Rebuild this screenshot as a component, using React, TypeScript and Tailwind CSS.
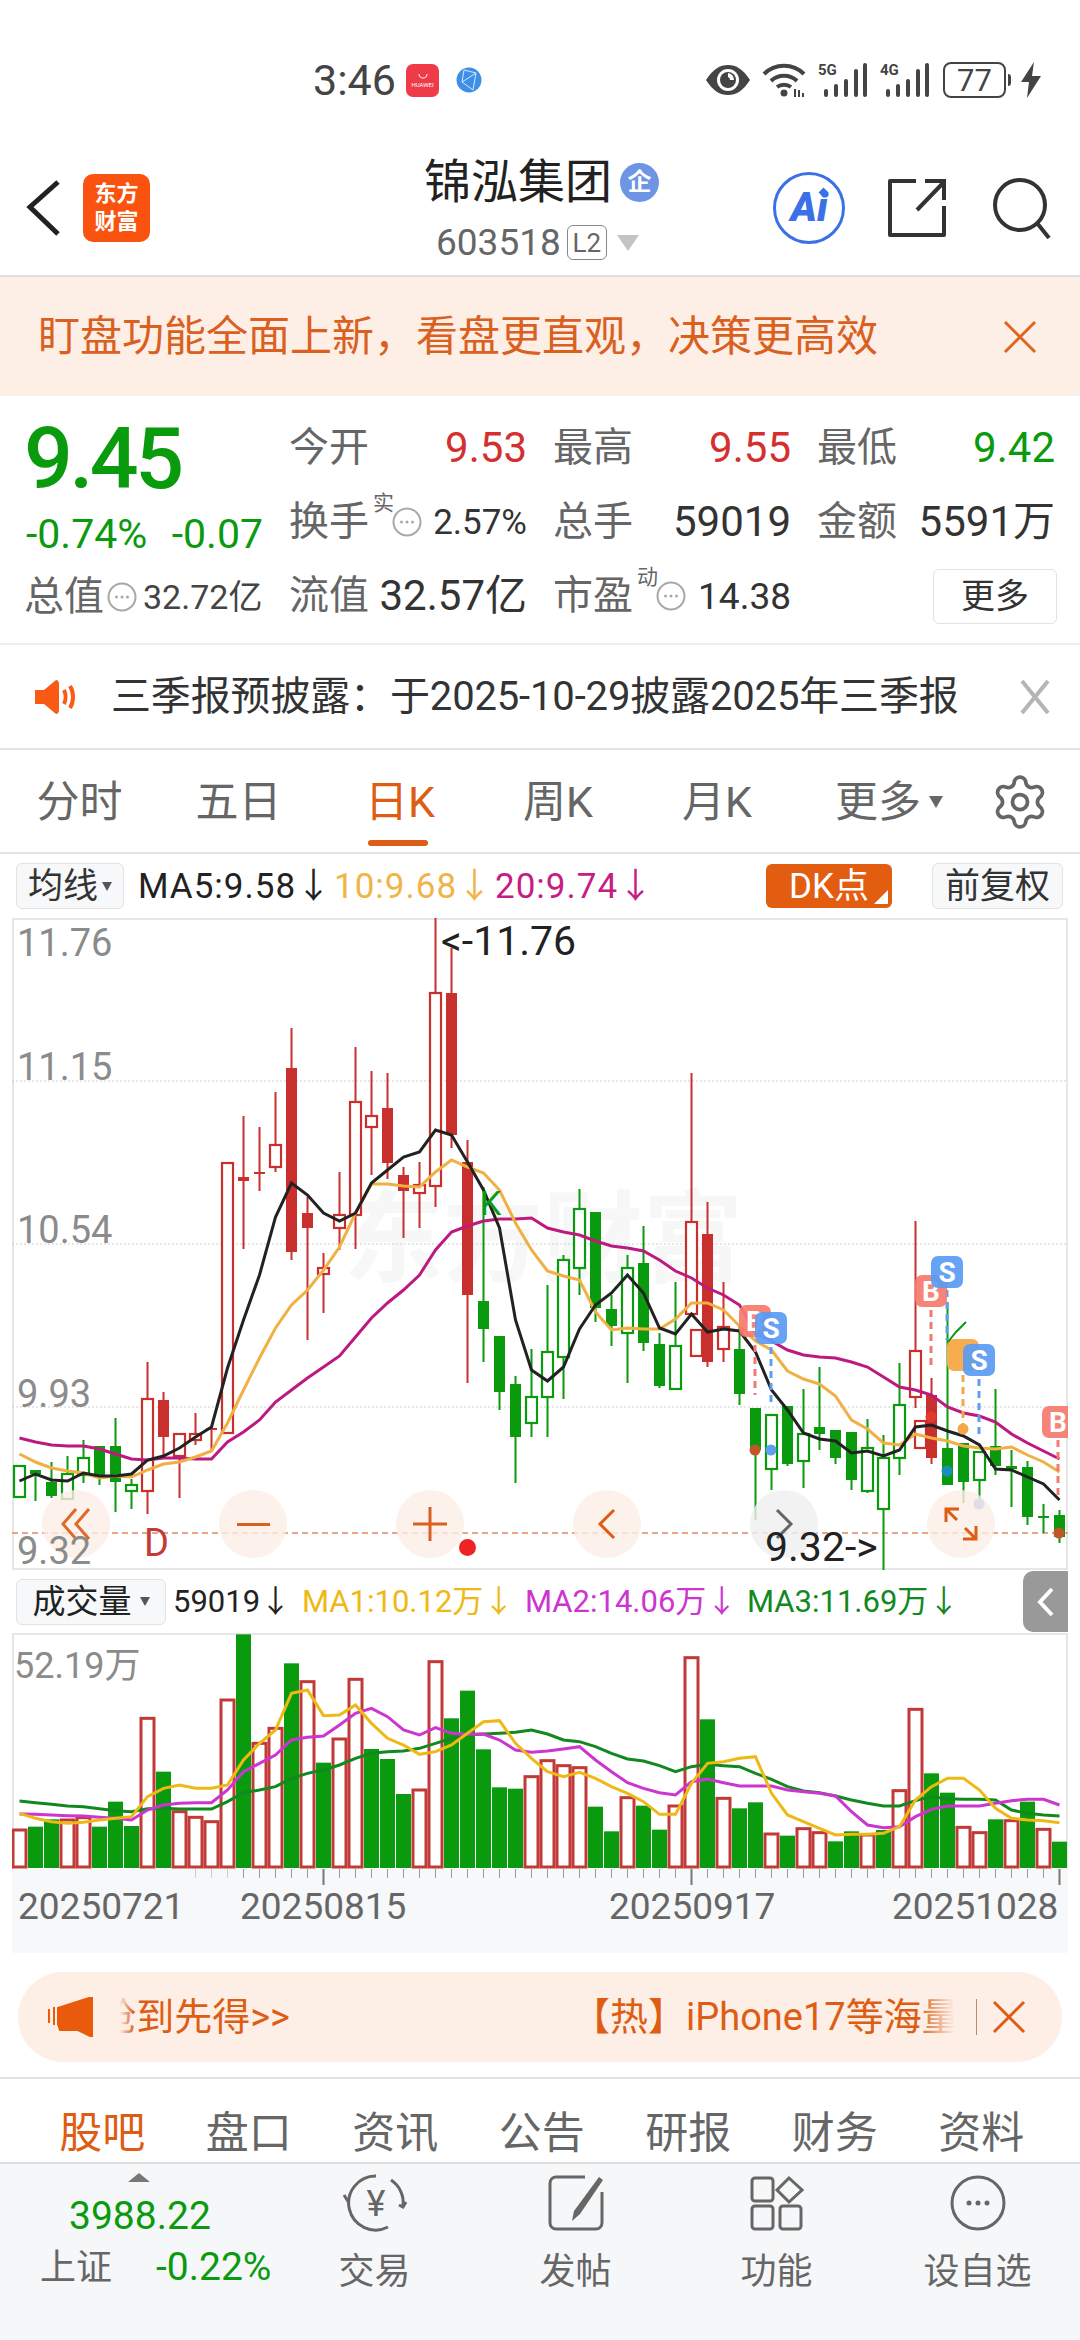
import { Settings } from 'lucide-react';

const RED = '#c92f2d';
const GREEN = '#0a9a0e';

// [kind, wickTop, bodyTop, bodyBottom, wickBottom] r/g hollow, R/G solid
type Candle = [string, number, number, number, number];

const candles: Candle[] = [
  ['g', 1466, 1466, 1497, 1498], ['G', 1470, 1470, 1474, 1501], ['G', 1462, 1482, 1496, 1498], ['g', 1456, 1474, 1499, 1499],
  ['g', 1440, 1458, 1475, 1483], ['G', 1446, 1446, 1475, 1485], ['G', 1418, 1446, 1482, 1512], ['g', 1479, 1485, 1491, 1509],
  ['r', 1362, 1399, 1491, 1514], ['R', 1392, 1400, 1437, 1457], ['r', 1434, 1434, 1456, 1498], ['r', 1413, 1434, 1440, 1445],
  ['R', 1428, 1428, 1430, 1450], ['r', 1163, 1163, 1433, 1434], ['R', 1116, 1177, 1181, 1249], ['R', 1127, 1172, 1174, 1191],
  ['r', 1092, 1145, 1167, 1172], ['R', 1028, 1068, 1252, 1260], ['R', 1197, 1213, 1228, 1340], ['r', 1253, 1268, 1274, 1313],
  ['r', 1172, 1215, 1228, 1250], ['r', 1047, 1102, 1215, 1249], ['r', 1071, 1116, 1127, 1175], ['R', 1073, 1108, 1163, 1179],
  ['R', 1167, 1175, 1191, 1238], ['r', 1162, 1185, 1193, 1228], ['r', 918, 993, 1186, 1207], ['R', 948, 993, 1135, 1148],
  ['R', 1140, 1162, 1295, 1383], ['G', 1187, 1301, 1329, 1362], ['G', 1336, 1336, 1392, 1410], ['G', 1376, 1384, 1437, 1483],
  ['g', 1349, 1397, 1423, 1437], ['g', 1285, 1352, 1397, 1437], ['g', 1255, 1260, 1357, 1399], ['g', 1189, 1209, 1268, 1295],
  ['G', 1212, 1212, 1308, 1322], ['G', 1295, 1309, 1326, 1346], ['g', 1255, 1268, 1333, 1383], ['G', 1226, 1263, 1343, 1351],
  ['G', 1333, 1344, 1386, 1388], ['g', 1282, 1346, 1389, 1389], ['r', 1073, 1222, 1314, 1314], ['R', 1202, 1234, 1362, 1367],
  ['r', 1282, 1327, 1349, 1362], ['G', 1326, 1349, 1394, 1405], ['G', 1408, 1408, 1450, 1520], ['g', 1415, 1415, 1469, 1490],
  ['G', 1406, 1406, 1464, 1466], ['g', 1389, 1434, 1461, 1488], ['G', 1367, 1427, 1434, 1450], ['G', 1430, 1430, 1458, 1464],
  ['G', 1432, 1432, 1480, 1490], ['g', 1419, 1448, 1491, 1493], ['g', 1435, 1458, 1509, 1570], ['g', 1363, 1405, 1458, 1475],
  ['r', 1221, 1351, 1397, 1408], ['R', 1378, 1395, 1458, 1464], ['G', 1302, 1448, 1485, 1485], ['G', 1443, 1443, 1482, 1503],
  ['g', 1452, 1452, 1480, 1503], ['G', 1389, 1446, 1466, 1475], ['G', 1450, 1466, 1469, 1507], ['G', 1461, 1467, 1517, 1525],
  ['G', 1504, 1516, 1518, 1533], ['G', 1510, 1515, 1537, 1543],
];

const ma5 = [1481, 1474, 1480, 1481, 1473, 1476, 1476, 1474, 1460, 1456, 1448, 1437, 1427, 1368, 1320, 1275, 1217, 1183, 1195, 1213, 1221, 1213, 1183, 1170, 1157, 1152, 1130, 1135, 1162, 1190, 1228, 1320, 1370, 1381, 1367, 1329, 1305, 1293, 1275, 1293, 1328, 1334, 1314, 1332, 1329, 1331, 1352, 1390, 1410, 1433, 1439, 1441, 1453, 1451, 1456, 1450, 1427, 1425, 1431, 1436, 1445, 1469, 1470, 1477, 1484, 1500];
const ma10 = [1454, 1462, 1468, 1471, 1473, 1478, 1476, 1477, 1470, 1464, 1462, 1457, 1451, 1423, 1390, 1358, 1328, 1305, 1290, 1270, 1247, 1213, 1184, 1184, 1186, 1187, 1172, 1160, 1167, 1173, 1190, 1223, 1250, 1271, 1276, 1280, 1312, 1330, 1328, 1329, 1329, 1319, 1303, 1303, 1310, 1326, 1341, 1350, 1371, 1379, 1384, 1396, 1420, 1429, 1443, 1445, 1434, 1438, 1441, 1446, 1448, 1449, 1447, 1455, 1462, 1472];
const ma20 = [1438, 1442, 1445, 1446, 1446, 1449, 1454, 1459, 1460, 1458, 1458, 1459, 1459, 1442, 1432, 1420, 1402, 1390, 1378, 1367, 1356, 1337, 1318, 1303, 1290, 1275, 1250, 1232, 1226, 1221, 1219, 1219, 1218, 1228, 1232, 1235, 1241, 1246, 1248, 1251, 1260, 1271, 1278, 1288, 1295, 1305, 1333, 1341, 1350, 1355, 1357, 1358, 1362, 1367, 1377, 1387, 1390, 1395, 1407, 1413, 1416, 1422, 1434, 1443, 1451, 1459];

// volume tops, r = hollow red, G = solid green
const volKinds = 'rGGrrGGGrGrrrrGrrGrGrrGGGrrGGGGGrrrrGGrGGrrGrGGrGrrGGrGrrGGrrGrGrG';
const volTops = [780, 770, 748, 750, 743, 770, 695, 768, 445, 605, 725, 742, 755, 390, 193, 520, 475, 280, 335, 578, 507, 328, 537, 567, 672, 660, 275, 445, 362, 538, 652, 656, 620, 572, 587, 593, 710, 784, 683, 707, 779, 708, 263, 448, 685, 715, 697, 792, 797, 776, 788, 814, 784, 795, 780, 662, 418, 610, 668, 772, 788, 748, 752, 695, 778, 815];
const vma1 = [730, 745, 755, 760, 757, 750, 745, 740, 680, 655, 645, 655, 655, 645, 570, 520, 480, 370, 360, 437, 435, 405, 460, 505, 525, 553, 545, 525, 490, 455, 452, 520, 565, 605, 620, 607, 625, 650, 670, 695, 733, 733, 640, 580, 575, 565, 560, 670, 735, 755, 775, 795, 793, 793, 790, 770, 690, 650, 625, 625, 660, 715, 745, 750, 752, 758];
const vma2 = [732, 733, 735, 737, 738, 742, 745, 750, 720, 705, 700, 698, 698, 660, 605, 580, 555, 510, 502, 498, 465, 430, 415, 440, 480, 495, 473, 490, 493, 492, 510, 540, 547, 543, 537, 530, 570, 605, 638, 655, 668, 675, 635, 627, 638, 648, 648, 648, 660, 665, 670, 678, 725, 765, 773, 770, 740, 718, 708, 708, 708, 700, 692, 688, 688, 705];
const vma3 = [693, 698, 703, 708, 710, 716, 722, 725, 716, 715, 717, 717, 717, 695, 668, 660, 650, 625, 610, 600, 585, 565, 550, 545, 543, 535, 520, 505, 495, 492, 490, 487, 480, 492, 510, 515, 530, 550, 567, 573, 587, 605, 590, 583, 587, 590, 610, 628, 650, 663, 668, 678, 690, 700, 708, 708, 692, 680, 686, 688, 688, 690, 720, 730, 735, 738];

const cx = (i: number) => 19.5 + 16 * i;
const volY = (v: number) => 1570 + v / 3;
const pts = (ys: number[]) => ys.map((y, i) => `${cx(i)},${y}`).join(' ');
const volPts = (ys: number[]) => ys.map((y, i) => `${cx(i)},${volY(y)}`).join(' ');

const Badge = ({ x, y, label, color }: { x: number; y: number; label: string; color: string }) => (
  <g>
    <rect x={x - 16} y={y - 16} width={32} height={32} rx={7} fill={color} fillOpacity={0.92} />
    <text x={x} y={y + 10} textAnchor="middle" fontSize={28} fontWeight={700} fill="#fff" fontFamily="Roboto, sans-serif">{label}</text>
  </g>
);

const Dash = ({ x, y1, y2, color }: { x: number; y1: number; y2: number; color: string }) => (
  <line x1={x} x2={x} y1={y1} y2={y2} stroke={color} strokeWidth={3} strokeDasharray="7 5" />
);

const PriceChart = () => (
  <svg viewBox="12 918 1056 652" width={1056} height={652} className="absolute -left-[2px] -top-[2px]">
    {[1081, 1244, 1407].map((y) => (
      <line key={y} x1={12} x2={1068} y1={y} y2={y} stroke="#cfcfcf" strokeWidth={1} strokeDasharray="2 2" />
    ))}
    <line x1={12} x2={1068} y1={1533} y2={1533} stroke="#e8a688" strokeWidth={2} strokeDasharray="6 4" />
    {candles.map(([k, wt, bt, bb, wb], i) => {
      const color = k === 'r' || k === 'R' ? RED : GREEN;
      const hollow = k === 'r' || k === 'g';
      return (
        <g key={i}>
          <line x1={cx(i)} x2={cx(i)} y1={wt} y2={wb} stroke={color} strokeWidth={2} />
          {hollow ? (
            <rect x={cx(i) - 5.5} y={bt} width={11} height={bb - bt} fill="#fff" stroke={color} strokeWidth={2.2} />
          ) : (
            <rect x={cx(i) - 5.5} y={bt} width={11} height={bb - bt} fill={color} />
          )}
        </g>
      );
    })}
    <rect x={691} y={1330} width={11} height={26} fill="#fff" stroke={RED} strokeWidth={2.2} />
    <rect x={915} y={1421} width={11} height={27} fill="#fff" stroke={RED} strokeWidth={2.2} />
    <polyline points={pts(ma20)} fill="none" stroke="#bd1a80" strokeWidth={3} />
    <polyline points={pts(ma10)} fill="none" stroke="#f0b043" strokeWidth={3} />
    <polyline points={pts(ma5)} fill="none" stroke="#222222" strokeWidth={3} />

    <Dash x={755} y1={1345} y2={1395} color="#f07b70" />
    <Dash x={771} y1={1347} y2={1403} color="#5f9ff0" />
    <Dash x={931} y1={1310} y2={1368} color="#f07b70" />
    <Dash x={947} y1={1290} y2={1340} color="#5f9ff0" />
    <Dash x={963} y1={1375} y2={1425} color="#f3a64a" />
    <Dash x={979} y1={1379} y2={1435} color="#5f9ff0" />
    <Dash x={1058} y1={1440} y2={1500} color="#f07b70" />
    <circle cx={755} cy={1450} r={5.5} fill="#c0562a" />
    <circle cx={771} cy={1450} r={5.5} fill="#5f9ff0" />
    <circle cx={931} cy={1417} r={5.5} fill="#e23b2e" />
    <circle cx={947} cy={1471} r={5.5} fill="#1c8fb8" />
    <circle cx={963} cy={1429} r={5.5} fill="#f3a64a" />
    <circle cx={979} cy={1504} r={5.5} fill="#5f9ff0" />
    <circle cx={1059} cy={1533} r={5.5} fill="#c0562a" />
    <Badge x={755} y={1321} label="B" color="#f67a6e" />
    <Badge x={771} y={1328} label="S" color="#5a9bf4" />
    <Badge x={931} y={1291} label="B" color="#f67a6e" />
    <Badge x={947} y={1272} label="S" color="#5a9bf4" />
    <rect x={947} y={1339} width={32} height={32} rx={7} fill="#f7ac4e" />
    <path d="M948 1342l8-10 10-10" fill="none" stroke={GREEN} strokeWidth={2} />
    <Badge x={979} y={1360} label="S" color="#5a9bf4" />
    <Badge x={1058} y={1422} label="B" color="#f67a6e" />
    <text x={480} y={1215} fontSize={34} fill={GREEN} fontFamily="Roboto, sans-serif">K</text>
  </svg>
);

const VolumeChart = () => (
  <svg viewBox="12 1633 1056 236" width={1056} height={236} className="absolute -left-[2px] -top-[2px]">
    {volKinds.split('').map((k, i) =>
      k === 'r' ? (
        <rect key={i} x={cx(i) - 6.5} y={volY(volTops[i])} width={13} height={1867 - volY(volTops[i])} fill="#fff" stroke="#c23a38" strokeWidth={3} />
      ) : (
        <rect key={i} x={cx(i) - 7.5} y={volY(volTops[i])} width={15} height={1868 - volY(volTops[i])} fill={GREEN} />
      ),
    )}
    <polyline points={volPts(vma3)} fill="none" stroke="#11891e" strokeWidth={3} />
    <polyline points={volPts(vma2)} fill="none" stroke="#cc35cf" strokeWidth={3} />
    <polyline points={volPts(vma1)} fill="none" stroke="#efb915" strokeWidth={3} />
  </svg>
);

const Ticks = () => (
  <svg viewBox="12 1869 1056 18" width={1056} height={18} className="absolute left-0 top-0">
    {Array.from({ length: 55 }).map((_, n) => {
      const i = n + 11;
      const major = i === 19 || i === 42 || i === 65;
      return <line key={i} x1={cx(i)} x2={cx(i)} y1={1869} y2={major ? 1885 : 1878} stroke={major ? '#777' : i < 14 ? '#ccc' : '#999'} strokeWidth={major ? 2 : 1} />;
    })}
  </svg>
);

const DotCircle = () => (
  <svg width={30} height={30} viewBox="0 0 30 30" className="shrink-0">
    <circle cx={15} cy={15} r={13.5} fill="none" stroke="#a8a8a8" strokeWidth={2} />
    <circle cx={9.5} cy={15} r={1.5} fill="#a8a8a8" />
    <circle cx={15} cy={15} r={1.5} fill="#a8a8a8" />
    <circle cx={20.5} cy={15} r={1.5} fill="#a8a8a8" />
  </svg>
);

const Signal = ({ label }: { label: string }) => (
  <div className="relative h-[34px] w-[50px]">
    <span className="absolute left-0 top-0 text-[15px] font-bold leading-none text-[#444]">{label}</span>
    <svg width={50} height={34} viewBox="0 0 50 34" className="absolute inset-0">
      <rect x={6} y={26} width={4} height={8} rx={2} fill="#444" />
      <rect x={16} y={21} width={4} height={13} rx={2} fill="#444" />
      <rect x={26} y={16} width={4} height={18} rx={2} fill="#444" />
      <rect x={36} y={6} width={4} height={28} rx={2} fill="#444" />
      <rect x={45} y={0} width={4} height={34} rx={2} fill="#444" />
    </svg>
  </div>
);

const StatusBar = () => (
  <div className="flex h-[110px] shrink-0 items-center pt-[50px] pl-[313px]">
    <span className="w-[93px] text-[43px] leading-none text-[#444]">3:46</span>
    <div className="flex h-[33px] w-[33px] flex-col items-center justify-end rounded-[7px] bg-[#ee3b47] pb-[9px]">
      <svg width={10} height={5} viewBox="0 0 10 5" className="mb-[3px]">
        <path d="M1 0c0 3 2 4 4 4s4-1 4-4" fill="none" stroke="#fff" strokeWidth={1} />
      </svg>
      <span className="text-[6px] leading-none text-white">HUAWEI</span>
    </div>
    <svg width={26} height={26} viewBox="0 0 26 26" className="ml-[17px]">
      <circle cx={13} cy={13} r={12.5} fill="#3d8fe8" />
      <path d="M8 3l-2 12 11 8M6 15L20 6l-3 17M8 3l12 3" fill="none" stroke="#d7e9fb" strokeWidth={1} />
    </svg>
    <svg width={46} height={32} viewBox="0 0 46 32" className="ml-[223px]">
      <path d="M1 16C8 5 15 1 23 1s15 4 22 15c-7 11-14 15-22 15S8 27 1 16z" fill="#444" />
      <circle cx={23} cy={16} r={11} fill="#fff" />
      <circle cx={23} cy={16} r={8} fill="#444" />
      <path d="M23 9a7 7 0 0 1 6 7h-4a3 3 0 0 0-2-3z" fill="#fff" />
    </svg>
    <svg width={44} height={34} viewBox="0 0 44 34" className="ml-[11px]">
      <path d="M2 11C13 0 31 0 42 11M9 18c7-7 19-7 26 0M15 24c4-3 10-3 14 0" fill="none" stroke="#444" strokeWidth={4} />
      <circle cx={22} cy={30} r={3.5} fill="#444" />
      <path d="M33 26v8M37 34v-7M41 30v4" stroke="#444" strokeWidth={2} />
    </svg>
    <div className="ml-[12px]"><Signal label="5G" /></div>
    <div className="ml-[12px]"><Signal label="4G" /></div>
    <div className="ml-[13px] flex h-[36px] w-[63px] items-center justify-center rounded-[8px] border-2 border-[#444]">
      <span className="text-[31px] leading-none text-[#444]">77</span>
    </div>
    <div className="ml-[2px] h-[12px] w-[3px] rounded-r bg-[#444]" />
    <svg width={22} height={36} viewBox="0 0 22 36" className="ml-[9px]">
      <path d="M14 0L1 20h8L7 36 21 14h-9z" fill="#444" />
    </svg>
  </div>
);

const Header = () => (
  <div className="flex h-[165px] shrink-0 items-center pt-[30px]">
    <svg width={40} height={60} viewBox="0 0 40 60" className="ml-[24px]">
      <path d="M34 4L6 29l28 27" fill="none" stroke="#222" strokeWidth={5} />
    </svg>
    <div className="ml-[19px] flex h-[68px] w-[67px] flex-col items-center justify-center rounded-[10px] bg-[#fa5310] text-[22px] font-bold leading-[28px] text-white">
      <span>东方</span>
      <span>财富</span>
    </div>
    <div className="ml-[274px] flex w-[240px] flex-col">
      <div className="flex items-center">
        <span className="text-[47px] leading-[56px] text-[#222]">锦泓集团</span>
        <div className="ml-[8px] flex h-[39px] w-[39px] items-center justify-center rounded-full bg-[#6e95e3] text-[24px] font-bold leading-none text-white">企</div>
      </div>
      <div className="mt-[14px] flex items-center pl-[12px]">
        <span className="text-[37px] leading-none text-[#666]">603518</span>
        <span className="ml-[6px] flex h-[35px] w-[40px] items-center justify-center rounded-[6px] border border-[#888] text-[26px] leading-none text-[#666]">L2</span>
        <div className="ml-[10px] h-0 w-0 border-x-[11px] border-t-[16px] border-x-transparent border-t-[#c4c4c4]" />
      </div>
    </div>
    <div className="relative ml-[109px] flex h-[72px] w-[72px] items-center justify-center rounded-full border-[3px] border-[#3b70e6] text-[40px] font-black italic leading-none text-[#3b70e6]">
      Ai
      <div className="absolute right-[15px] top-[14px] h-[7px] w-[7px] rotate-45 bg-[#3b70e6]" />
    </div>
    <svg width={60} height={60} viewBox="0 0 60 60" className="ml-[42px]">
      <path d="M29 3H3v54h54V28" fill="none" stroke="#333" strokeWidth={4} strokeLinejoin="round" />
      <path d="M30 32L57 4M38 3h19v19" fill="none" stroke="#333" strokeWidth={4} />
    </svg>
    <svg width={60} height={62} viewBox="0 0 60 62" className="ml-[46px]">
      <circle cx={27} cy={28} r={25} fill="none" stroke="#333" strokeWidth={4} />
      <path d="M44 46l12 15" stroke="#333" strokeWidth={4} />
    </svg>
  </div>
);

const Banner = () => (
  <div className="flex h-[121px] shrink-0 items-center border-t-2 border-[#e2dedb] bg-[#fdeee6] pl-[38px] text-[#d9601f]">
    <span className="w-[965px] text-[42px] leading-none">盯盘功能全面上新，看盘更直观，决策更高效</span>
    <svg width={34} height={34} viewBox="0 0 34 34">
      <path d="M2 2l30 30M32 2L2 32" stroke="#e0651f" strokeWidth={3} />
    </svg>
  </div>
);

const Stat = ({ label, value, color }: { label: string; value: string; color: string }) => (
  <div className="flex h-[74px] w-[238px] items-center justify-between">
    <span className="text-[40px] leading-none text-[#666]">{label}</span>
    <span className={`text-[42px] leading-none ${color}`}>{value}</span>
  </div>
);

const Quote = () => (
  <div className="flex h-[249px] shrink-0 border-b-2 border-[#eeeeee] pl-[24px] pt-[15px]">
    <div className="flex w-[265px] flex-col">
      <div className="flex h-[96px] items-center text-[86px] font-medium leading-none tracking-[-3.5px] text-[#0a9a0e]">9.45</div>
      <div className="ml-[2px] flex h-[54px] w-[237px] items-center justify-between text-[41px] leading-none text-[#0a9a0e]">
        <span>-0.74%</span>
        <span>-0.07</span>
      </div>
      <div className="flex h-[72px] items-center">
        <span className="text-[40px] leading-none text-[#666]">总值</span>
        <div className="ml-[3px]"><DotCircle /></div>
        <span className="ml-[6px] text-[34px] leading-none text-[#444]">32.72亿</span>
      </div>
    </div>
    <div className="flex flex-col">
      <div className="flex gap-[26px]">
        <Stat label="今开" value="9.53" color="text-[#d4302f]" />
        <Stat label="最高" value="9.55" color="text-[#d4302f]" />
        <Stat label="最低" value="9.42" color="text-[#0a9a0e]" />
      </div>
      <div className="flex gap-[26px]">
        <div className="flex h-[74px] w-[238px] items-center">
          <span className="text-[40px] leading-none text-[#666]">换手</span>
          <span className="ml-[4px] mb-[38px] text-[21px] leading-none text-[#666]">实</span>
          <div className="-ml-[2px]"><DotCircle /></div>
          <span className="ml-auto text-[35px] leading-none text-[#333]">2.57%</span>
        </div>
        <Stat label="总手" value="59019" color="text-[#333]" />
        <Stat label="金额" value="5591万" color="text-[#333]" />
      </div>
      <div className="flex gap-[26px]">
        <div className="flex h-[74px] w-[238px] items-center">
          <span className="text-[40px] leading-none text-[#666]">流值</span>
          <span className="ml-auto text-[42px] leading-none text-[#333]">32.57亿</span>
        </div>
        <div className="flex h-[74px] w-[238px] items-center">
          <span className="text-[40px] leading-none text-[#666]">市盈</span>
          <span className="ml-[4px] mb-[38px] text-[21px] leading-none text-[#666]">动</span>
          <div className="-ml-[2px]"><DotCircle /></div>
          <span className="ml-auto text-[37px] leading-none text-[#333]">14.38</span>
        </div>
        <div className="flex h-[74px] w-[238px] items-center justify-end">
          <span className="-mr-[2px] flex h-[55px] w-[124px] items-center justify-center rounded-[6px] border border-[#e2e2e2] text-[34px] leading-none text-[#333]">更多</span>
        </div>
      </div>
    </div>
  </div>
);

const Notice = () => (
  <div className="flex h-[105px] shrink-0 items-center border-b-2 border-[#e4e4e4] pl-[34px]">
    <svg width={44} height={36} viewBox="0 0 44 36">
      <path d="M1 11h9L22 1c2 0 3 2 3 4v26c0 2-1 4-3 4L10 25H1z" fill="#fa5a14" />
      <path d="M30 11c2 4 2 10 0 14M36 7c4 6 4 16 0 22" fill="none" stroke="#fa5a14" strokeWidth={4} />
    </svg>
    <span className="ml-[33px] w-[909px] text-[40px] leading-none tracking-[-0.15px] text-[#333]">三季报预披露：于2025-10-29披露2025年三季报</span>
    <svg width={30} height={36} viewBox="0 0 30 36">
      <path d="M2 2l26 32M28 2L2 34" stroke="#b5b5b5" strokeWidth={4} />
    </svg>
  </div>
);

const tabClass = 'flex justify-center text-[43px] leading-none text-[#666]';

const Tabs = () => (
  <div className="flex h-[104px] shrink-0 items-center border-b-2 border-[#e4e4e4] pt-[2px]">
    <span className={`${tabClass} w-[159px]`}>分时</span>
    <span className={`${tabClass} w-[159px]`}>五日</span>
    <div className="relative flex w-[164px] justify-center text-[43px] leading-none text-[#dd5d14]">
      日K
      <div className="absolute left-[50px] top-[59px] h-[6px] w-[60px] rounded-full bg-[#dd5d14]" />
    </div>
    <span className={`${tabClass} w-[152px]`}>周K</span>
    <span className={`${tabClass} w-[166px]`}>月K</span>
    <div className="ml-[4px] flex w-[170px] items-center justify-center text-[43px] leading-none text-[#666]">
      更多
      <div className="ml-[8px] h-0 w-0 border-x-[7px] border-t-[12px] border-x-transparent border-t-[#666]" />
    </div>
    <Settings size={60} strokeWidth={1.5} color="#666" className="ml-[16px]" />
  </div>
);

const MaRow = () => (
  <div className="flex h-[64px] shrink-0 items-center pl-[16px] text-[35px] leading-none tracking-[1px]">
    <div className="flex h-[46px] w-[108px] items-center justify-center rounded-[6px] border border-[#e2e2e2] bg-[#f7f8fa] tracking-normal text-[#333]">
      均线
      <div className="ml-[4px] h-0 w-0 border-x-[5px] border-t-[9px] border-x-transparent border-t-[#555]" />
    </div>
    <span className="ml-[14px] w-[196px] text-[#222]">MA5:9.58↓</span>
    <span className="w-[161px] text-[#f0b448]">10:9.68↓</span>
    <span className="text-[#c71b85]">20:9.74↓</span>
    <div className="relative ml-auto flex h-[44px] w-[126px] items-center justify-center rounded-[6px] bg-[#e35d10] text-white tracking-normal">
      DK点
      <div className="absolute bottom-[4px] right-[4px] h-0 w-0 border-b-[14px] border-l-[14px] border-b-white border-l-transparent" />
    </div>
    <div className="ml-[40px] mr-[17px] flex h-[46px] w-[131px] items-center justify-center rounded-[6px] border border-[#e2e2e2] bg-[#f7f8fa] tracking-normal text-[#333]">前复权</div>
  </div>
);

const roundBtn = 'absolute top-[570px] flex h-[68px] w-[68px] items-center justify-center rounded-full';
const axisLabel = 'absolute left-[3px] text-[38px] leading-none text-[#8b8b8b]';

const PriceSection = () => (
  <div className="relative ml-[12px] h-[652px] w-[1056px] shrink-0 border-2 border-[#e6e6e6] bg-white">
    <div className="absolute left-[329px] top-[270px] text-[100px] font-bold leading-none text-[#f7f7f7]">东方财富</div>
    <PriceChart />
    <div className={`${roundBtn} left-[28px] bg-[#fdeee6]/80`}>
      <svg width={30} height={34} viewBox="0 0 30 34"><path d="M15 2L2 17l13 15M28 2L15 17l13 15" fill="none" stroke="#dd6a26" strokeWidth={3} /></svg>
    </div>
    <div className={`${roundBtn} left-[205px] bg-[#fdeee6]/80`}><div className="h-[3px] w-[33px] bg-[#d9601f]" /></div>
    <div className={`${roundBtn} left-[382px] bg-[#fdeee6]/80`}>
      <svg width={34} height={34} viewBox="0 0 34 34"><path d="M0 17h34M17 0v34" stroke="#d9601f" strokeWidth={3} /></svg>
    </div>
    <div className={`${roundBtn} left-[559px] bg-[#fdeee6]/80`}>
      <svg width={20} height={32} viewBox="0 0 20 32"><path d="M17 2L3 16l14 14" fill="none" stroke="#dd5d14" strokeWidth={3} /></svg>
    </div>
    <div className={`${roundBtn} left-[736px] bg-[#efefef]/80`}>
      <svg width={20} height={32} viewBox="0 0 20 32"><path d="M3 2l14 14L3 30" fill="none" stroke="#666" strokeWidth={3} /></svg>
    </div>
    <div className={`${roundBtn} left-[913px] bg-[#fdeee6]/80`}>
      <svg width={36} height={36} viewBox="0 0 36 36"><path d="M3 16V3h13M3 3l11 11M33 20v13H20M33 33L22 22" fill="none" stroke="#dd5d14" strokeWidth={3} /></svg>
    </div>
    <span className={`${axisLabel} top-[4px]`}>11.76</span>
    <span className={`${axisLabel} top-[128px]`}>11.15</span>
    <span className={`${axisLabel} top-[291px]`}>10.54</span>
    <span className={`${axisLabel} top-[455px]`}>9.93</span>
    <span className={`${axisLabel} top-[612px]`}>9.32</span>
    <span className="absolute left-[427px] top-[1px] text-[41px] leading-none text-[#222]">{'<-11.76'}</span>
    <span className="absolute left-[751px] top-[607px] text-[41px] leading-none text-[#222]">{'9.32->'}</span>
    <span className="absolute left-[130px] top-[604px] text-[38px] leading-none text-[#c33a36]">D</span>
    <div className="absolute left-[445px] top-[619px] h-[17px] w-[17px] rounded-full bg-[#ee2424]" />
  </div>
);

const VolRow = () => (
  <div className="relative flex h-[63px] shrink-0 items-center pl-[16px] text-[31px] leading-none">
    <div className="flex h-[46px] w-[150px] items-center justify-center rounded-[6px] border border-[#e2e2e2] bg-[#f7f8fa] text-[33px] text-[#222]">
      成交量
      <div className="ml-[8px] h-0 w-0 border-x-[5px] border-t-[9px] border-x-transparent border-t-[#555]" />
    </div>
    <span className="ml-[7px] w-[129px] text-[#222]">59019↓</span>
    <span className="w-[223px] text-[#eeb916]">MA1:10.12万↓</span>
    <span className="w-[222px] text-[#cc35cf]">MA2:14.06万↓</span>
    <span className="text-[#11891e]">MA3:11.69万↓</span>
    <div className="absolute right-[12px] top-[1px] flex h-[61px] w-[45px] items-center justify-center rounded-l-[10px] bg-[#999]">
      <svg width={20} height={32} viewBox="0 0 20 32"><path d="M16 3L4 16l12 13" fill="none" stroke="#fff" strokeWidth={4} /></svg>
    </div>
  </div>
);

const VolSection = () => (
  <div className="ml-[12px] w-[1056px] shrink-0">
    <div className="relative h-[236px] border-x-2 border-t-2 border-[#e6e6e6] bg-white">
      <VolumeChart />
      <span className="absolute left-[0px] top-[13px] text-[36px] leading-none text-[#8b8b8b]">52.19万</span>
    </div>
    <div className="relative flex h-[84px] bg-[#f7f8fa]">
      <Ticks />
      <span className="absolute left-[6px] top-[19px] text-[37px] leading-none text-[#666]">20250721</span>
      <span className="absolute left-[228px] top-[19px] text-[37px] leading-none text-[#666]">20250815</span>
      <span className="absolute left-[597px] top-[19px] text-[37px] leading-none text-[#666]">20250917</span>
      <span className="absolute left-[880px] top-[19px] text-[37px] leading-none text-[#666]">20251028</span>
    </div>
  </div>
);

const Promo = () => (
  <div className="flex h-[126px] shrink-0 flex-col border-b-2 border-[#e2e2e2] pt-[19px]">
    <div className="relative mx-[18px] flex h-[90px] items-center overflow-hidden rounded-[45px] bg-[#fdeee6] text-[38px] leading-none text-[#dd5d14]">
      <svg width={46} height={40} viewBox="0 0 46 40" className="ml-[30px]">
        <path d="M1 12v14M6 10v18M10 11l34-11v40L30 33H12l-2-6z" fill="#ea5a0c" stroke="#ea5a0c" strokeWidth={2} />
      </svg>
      <div className="ml-[16px] flex w-[180px] justify-end overflow-hidden whitespace-nowrap">抢到先得&gt;&gt;</div>
      <div className="ml-[282px] w-[392px] overflow-hidden whitespace-nowrap">【热】iPhone17等海量</div>
      <div className="ml-[12px] h-[36px] w-[1px] bg-[#b98a6e]" />
      <svg width={34} height={34} viewBox="0 0 34 34" className="ml-[15px]">
        <path d="M2 2l30 30M32 2L2 32" stroke="#dd5d14" strokeWidth={3} />
      </svg>
      <div className="absolute left-[92px] top-0 h-full w-[24px] bg-gradient-to-r from-[#fdeee6] from-40% to-transparent" />
      <div className="absolute left-[900px] top-0 h-full w-[46px] bg-gradient-to-l from-[#fdeee6] from-20% to-transparent" />
    </div>
  </div>
);

const subTabClass = 'flex w-[146.5px] justify-center text-[43px] leading-none text-[#666]';

const SubTabs = () => (
  <div className="flex h-[85px] shrink-0 items-center border-b-2 border-[#dedede] pl-[29px] pt-[26px]">
    <span className="flex w-[146.5px] justify-center text-[43px] leading-none text-[#dd5d14]">股吧</span>
    <span className={subTabClass}>盘口</span>
    <span className={subTabClass}>资讯</span>
    <span className={subTabClass}>公告</span>
    <span className={subTabClass}>研报</span>
    <span className={subTabClass}>财务</span>
    <span className={subTabClass}>资料</span>
  </div>
);

const NavItem = ({ label, children }: { label: string; children: React.ReactNode }) => (
  <div className="flex w-[201px] flex-col items-center pt-[9px]">
    <div className="flex h-[60px] items-center">{children}</div>
    <span className="mt-[21px] text-[36px] leading-none text-[#666]">{label}</span>
  </div>
);

const BottomBar = () => (
  <div className="flex flex-1 bg-[#f6f7f9]">
    <div className="flex w-[274px] flex-col">
      <div className="ml-[128px] mt-[9px] h-0 w-0 border-x-[11px] border-b-[9px] border-x-transparent border-b-[#777]" />
      <div className="mt-[15px] pl-[69px] text-[39px] leading-none text-[#0a9a0e]">3988.22</div>
      <div className="mt-[12px] flex items-center pl-[40px]">
        <span className="text-[36px] leading-none text-[#666]">上证</span>
        <span className="ml-[44px] text-[39px] leading-none text-[#0a9a0e]">-0.22%</span>
      </div>
    </div>
    <NavItem label="交易">
      <svg width={68} height={60} viewBox="0 0 68 60">
        <path d="M35 3A27 27 0 1 0 47 54" fill="none" stroke="#666" strokeWidth={3} />
        <path d="M50 7A27 27 0 0 1 62 33" fill="none" stroke="#666" strokeWidth={3} />
        <path d="M3 22l5 8M58 32l4 2 3-5" fill="none" stroke="#666" strokeWidth={3} />
        <text x={35} y={43} textAnchor="middle" fontSize={36} fill="#666" fontFamily="Roboto, sans-serif">¥</text>
      </svg>
    </NavItem>
    <NavItem label="发帖">
      <svg width={58} height={58} viewBox="0 0 58 58">
        <path d="M38 3H9a6 6 0 0 0-6 6v40a6 6 0 0 0 6 6h40a6 6 0 0 0 6-6V18" fill="none" stroke="#666" strokeWidth={3} />
        <path d="M52 3l4 3-23 34-8 7 2-10z" fill="#666" />
      </svg>
    </NavItem>
    <NavItem label="功能">
      <svg width={54} height={56} viewBox="0 0 54 56">
        <rect x={2} y={3} width={21} height={23} rx={3} fill="none" stroke="#666" strokeWidth={3} />
        <path d="M39 3l13 12-13 12-12-12z" fill="none" stroke="#666" strokeWidth={3} />
        <rect x={2} y={31} width={21} height={23} rx={3} fill="none" stroke="#666" strokeWidth={3} />
        <rect x={30} y={31} width={21} height={23} rx={3} fill="none" stroke="#666" strokeWidth={3} />
      </svg>
    </NavItem>
    <NavItem label="设自选">
      <svg width={56} height={56} viewBox="0 0 56 56">
        <circle cx={28} cy={28} r={26} fill="none" stroke="#666" strokeWidth={3} />
        <circle cx={19} cy={28} r={2.5} fill="#666" />
        <circle cx={28} cy={28} r={2.5} fill="#666" />
        <circle cx={37} cy={28} r={2.5} fill="#666" />
      </svg>
    </NavItem>
  </div>
);

export default function App() {
  return (
    <div className="flex h-[2340px] w-[1080px] flex-col overflow-hidden bg-white font-[Roboto,'Noto_Sans_CJK_SC',sans-serif]">
      <StatusBar />
      <Header />
      <Banner />
      <Quote />
      <Notice />
      <Tabs />
      <MaRow />
      <PriceSection />
      <VolRow />
      <VolSection />
      <Promo />
      <SubTabs />
      <BottomBar />
    </div>
  );
}
